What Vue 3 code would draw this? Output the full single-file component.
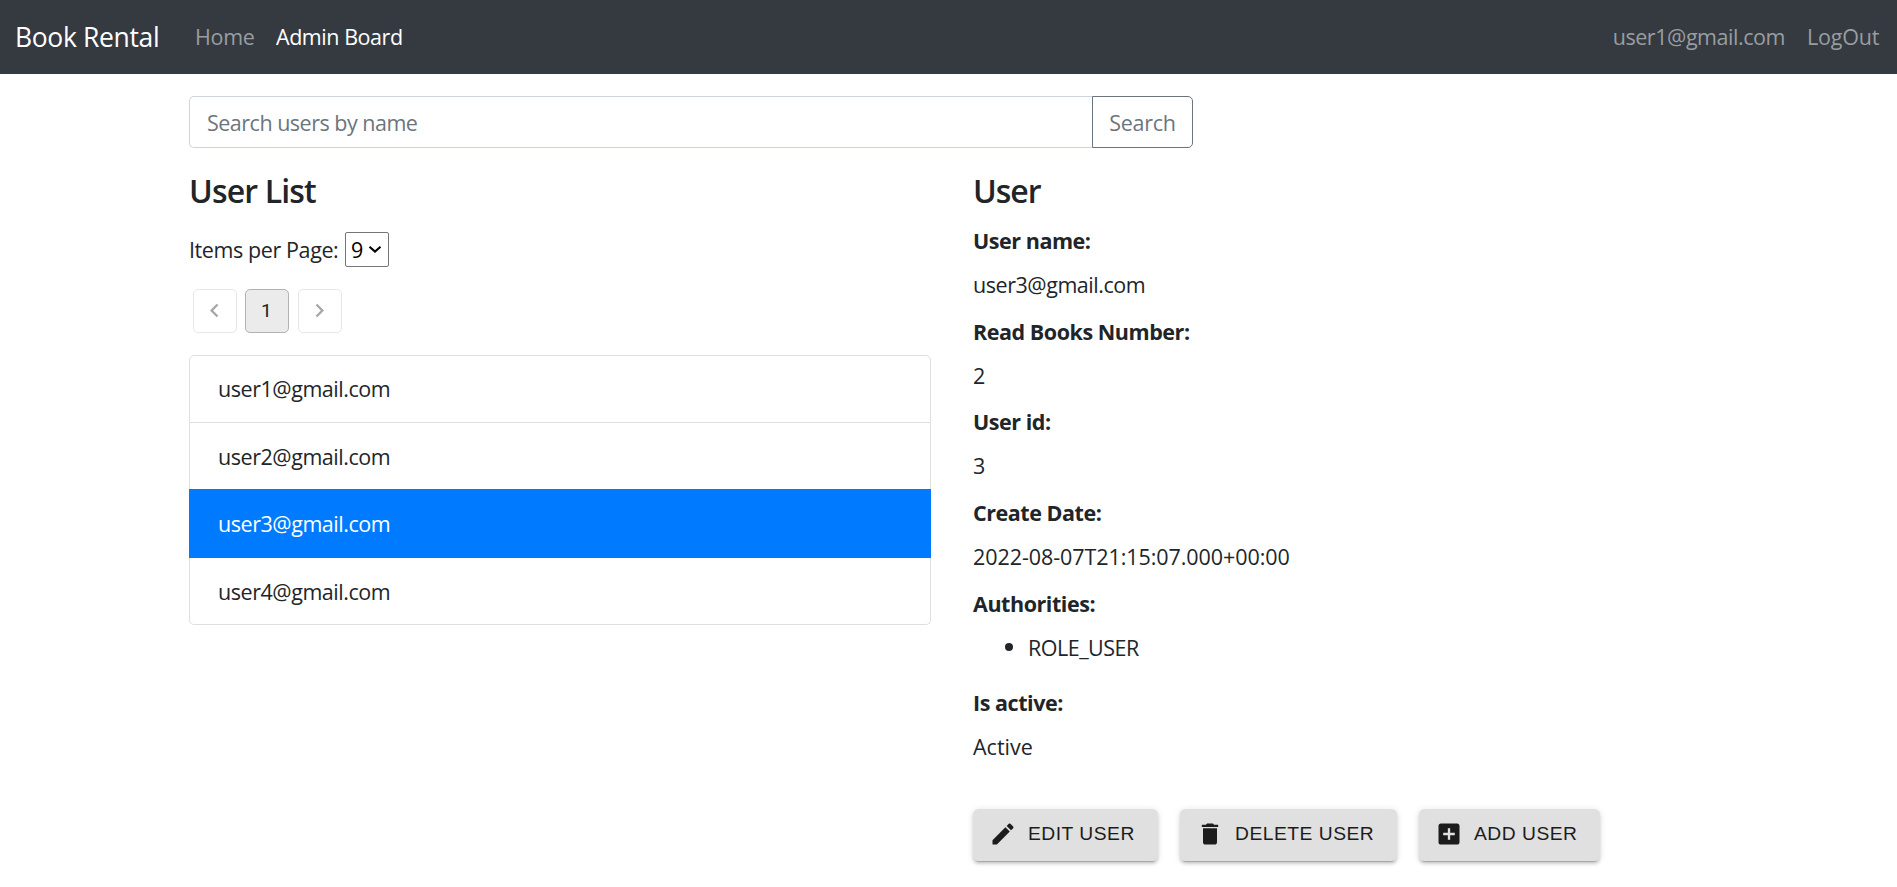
<script setup>
import { ref } from 'vue'

const users = ['user1@gmail.com', 'user2@gmail.com', 'user3@gmail.com', 'user4@gmail.com']
const active = ref(2)
const details = [
  { label: 'User name:', cls: 'l-name', value: 'user3@gmail.com', vcls: 'mail' },
  { label: 'Read Books Number:', cls: 'l-books', value: '2' },
  { label: 'User id:', cls: 'l-id', value: '3' },
  { label: 'Create Date:', cls: 'l-date', value: '2022-08-07T21:15:07.000+00:00', vcls: 'date' },
]
</script>

<template>
  <div class="page">
    <nav class="navbar">
      <a class="brand">Book Rental</a>
      <a class="link home">Home</a>
      <a class="link current">Admin Board</a>
      <a class="link account mail">user1@gmail.com</a>
      <a class="link logout">LogOut</a>
    </nav>

    <main class="container">
      <form class="search" @submit.prevent>
        <input class="field" type="text" placeholder="Search users by name" />
        <button class="search-btn" type="submit">Search</button>
      </form>

      <div class="columns">
        <section class="left">
          <h4 class="title title-list">User List</h4>
          <div class="per-page">
            <span class="per-label">Items per Page:</span>
            <div class="select">
              <span>9</span>
              <svg width="14" height="9" viewBox="0 0 14 9"><path d="M1.5 1.8 7 6.6 12.5 1.8" fill="none" stroke="#000" stroke-width="2.1" /></svg>
            </div>
          </div>
          <div class="pagination">
            <button class="page-btn off">
              <svg width="27" height="27" viewBox="0 0 24 24"><path d="M15.41 7.41 14 6l-6 6 6 6 1.41-1.41L10.83 12z" /></svg>
            </button>
            <button class="page-btn on">1</button>
            <button class="page-btn off">
              <svg width="27" height="27" viewBox="0 0 24 24"><path d="M10 6 8.59 7.41 13.17 12l-4.58 4.59L10 18l6-6z" /></svg>
            </button>
          </div>
          <ul class="list">
            <li v-for="(u, i) in users" :key="u" class="item" :class="{ active: i === active }" @click="active = i">
              <span class="mail">{{ u }}</span>
            </li>
          </ul>
        </section>

        <section class="right">
          <h4 class="title title-user">User</h4>
          <div v-for="d in details" :key="d.label" class="detail">
            <strong class="label" :class="d.cls">{{ d.label }}</strong>
            <span class="value" :class="d.vcls">{{ d.value }}</span>
          </div>
          <div class="detail roles">
            <strong class="label l-auth">Authorities:</strong>
            <span class="value role"><i class="dot"></i>ROLE_USER</span>
          </div>
          <div class="detail">
            <strong class="label l-active">Is active:</strong>
            <span class="value v-active">Active</span>
          </div>
          <div class="actions">
            <button class="action edit">
              <svg class="icon" viewBox="0 0 24 24"><path d="M3 17.25V21h3.75L17.81 9.94l-3.75-3.75L3 17.25zM20.71 7.04c.39-.39.39-1.02 0-1.41l-2.34-2.34a.9959.9959 0 0 0-1.41 0l-1.83 1.83 3.75 3.75 1.83-1.83z" /></svg>
              <span>EDIT USER</span>
            </button>
            <button class="action delete">
              <svg class="icon" viewBox="0 0 24 24"><path d="M6 19c0 1.1.9 2 2 2h8c1.1 0 2-.9 2-2V7H6v12zM19 4h-3.5l-1-1h-5l-1 1H5v2h14V4z" /></svg>
              <span>DELETE USER</span>
            </button>
            <button class="action add">
              <svg class="icon" viewBox="0 0 24 24"><path d="M19 3H5c-1.11 0-2 .9-2 2v14c0 1.1.89 2 2 2h14c1.1 0 2-.9 2-2V5c0-1.1-.9-2-2-2zm-2 10h-4v4h-2v-4H7v-2h4V7h2v4h4v2z" /></svg>
              <span>ADD USER</span>
            </button>
          </div>
        </section>
      </div>
    </main>
  </div>
</template>

<style>
body { background: #fff; overflow: hidden; }
</style>

<style scoped>
* { box-sizing: border-box; }
.page {
  height: 887px;
  font-family: "Open Sans", "Noto Sans", sans-serif;
  font-size: 21.5px;
  line-height: 33px;
  color: #212529;
  white-space: nowrap;
}
button { font-family: inherit; }
.navbar {
  display: flex;
  align-items: center;
  height: 74px;
  padding: 0 16px 2px 15px;
  background: #343a40;
}
.brand { width: 180px; padding-top: 2px; font-size: 26.5px; letter-spacing: -0.35px; color: #fff; }
.link { color: #9a9da0; }
.home { width: 81px; letter-spacing: -0.3px; }
.current { color: #fff; letter-spacing: -0.45px; }
.account { margin-left: auto; margin-right: 22px; }
.logout { width: 74px; letter-spacing: -0.2px; }
.mail { letter-spacing: -0.45px; }
.container { margin-left: 189px; padding-top: 22px; }
.search { display: flex; width: 1004px; height: 52px; }
.field {
  flex: 1;
  min-width: 0;
  padding: 1px 17px 0;
  border: 1px solid #ced4da;
  border-right: 0;
  border-radius: 5px 0 0 5px;
  font: inherit;
  letter-spacing: -0.5px;
  outline: none;
}
.field::placeholder { color: #6c757d; opacity: 1; }
.search-btn {
  width: 101px;
  padding: 1px 0 0;
  border: 1px solid #6c757d;
  border-radius: 0 5px 5px 0;
  background: #fff;
  color: #6c757d;
  font-size: 21.5px;
  letter-spacing: -0.3px;
}
.columns { display: flex; }
.left { width: 742px; margin-right: 42px; padding-top: 22px; }
.right { padding-top: 22px; }
.title { margin: 0; height: 40px; line-height: 41px; font-size: 32px; font-weight: 600; }
.title-list { letter-spacing: -0.85px; }
.title-user { letter-spacing: -1px; }
.per-page { display: flex; align-items: center; height: 35px; margin-top: 22px; }
.per-label { width: 156px; letter-spacing: -0.4px; }
.select {
  display: flex;
  align-items: center;
  justify-content: space-between;
  width: 44px;
  height: 35px;
  padding: 0 6px 0 5px;
  border: 1px solid #767676;
  border-radius: 2px;
  color: #000;
}
.pagination { display: flex; gap: 8px; margin: 22px 0 0 4px; }
.page-btn {
  display: flex;
  align-items: center;
  justify-content: center;
  width: 44px;
  height: 44px;
  padding: 0 1px 1px 0;
  border: 1px solid #e7e7e7;
  border-radius: 5px;
  background: #fff;
  font: 19.25px Roboto, sans-serif;
  color: #212121;
}
.page-btn.on { margin-right: 1px; border-color: #b2b2b2; background: #ebebeb; }
.page-btn svg { fill: #a6a6a6; }
.list { margin: 22px 0 0; padding: 0; list-style: none; }
.item {
  display: flex;
  align-items: center;
  height: 68px;
  padding: 0 28px;
  border: 1px solid #dfdfdf;
}
.item + .item { height: 67px; border-top: 0; }
.item:first-child { padding-bottom: 2px; border-radius: 5px 5px 0 0; }
.item:last-child { border-radius: 0 0 5px 5px; }
.item + .item.active { height: 69px; margin-top: -1px; border-color: #007bff; background: #007bff; color: #fff; }
.detail { display: flex; flex-direction: column; height: 90.7px; }
.title-user + .detail { margin-top: 14px; }
.detail.roles { height: 99px; }
.label { height: 44px; font-size: 21.5px; font-weight: 700; letter-spacing: -0.45px; }
.value { display: block; }
.date { letter-spacing: -0.07px; }
.role { display: flex; align-items: center; padding-left: 32px; letter-spacing: -0.5px; }
.dot { width: 8px; height: 8px; margin-right: 15px; border-radius: 50%; background: #212529; }
.actions { display: flex; gap: 22px; margin-top: 32.5px; }
.action {
  display: flex;
  align-items: center;
  height: 52px;
  padding: 0 0 1px 16px;
  border: 0;
  border-radius: 5.5px;
  background: #e0e0e0;
  box-shadow: 0 4px 1px -3px rgba(0, 0, 0, 0.2), 0 3px 3px 0 rgba(0, 0, 0, 0.14), 0 1px 7px 0 rgba(0, 0, 0, 0.12);
  font: 19.25px "Liberation Sans", Arial, sans-serif;
  letter-spacing: 0.5px;
  color: #1c1c1c;
}
.icon { width: 28px; height: 28px; margin-right: 11px; fill: currentColor; }
.edit { width: 185px; }
.delete { width: 217px; }
.add { width: 181px; }
</style>
